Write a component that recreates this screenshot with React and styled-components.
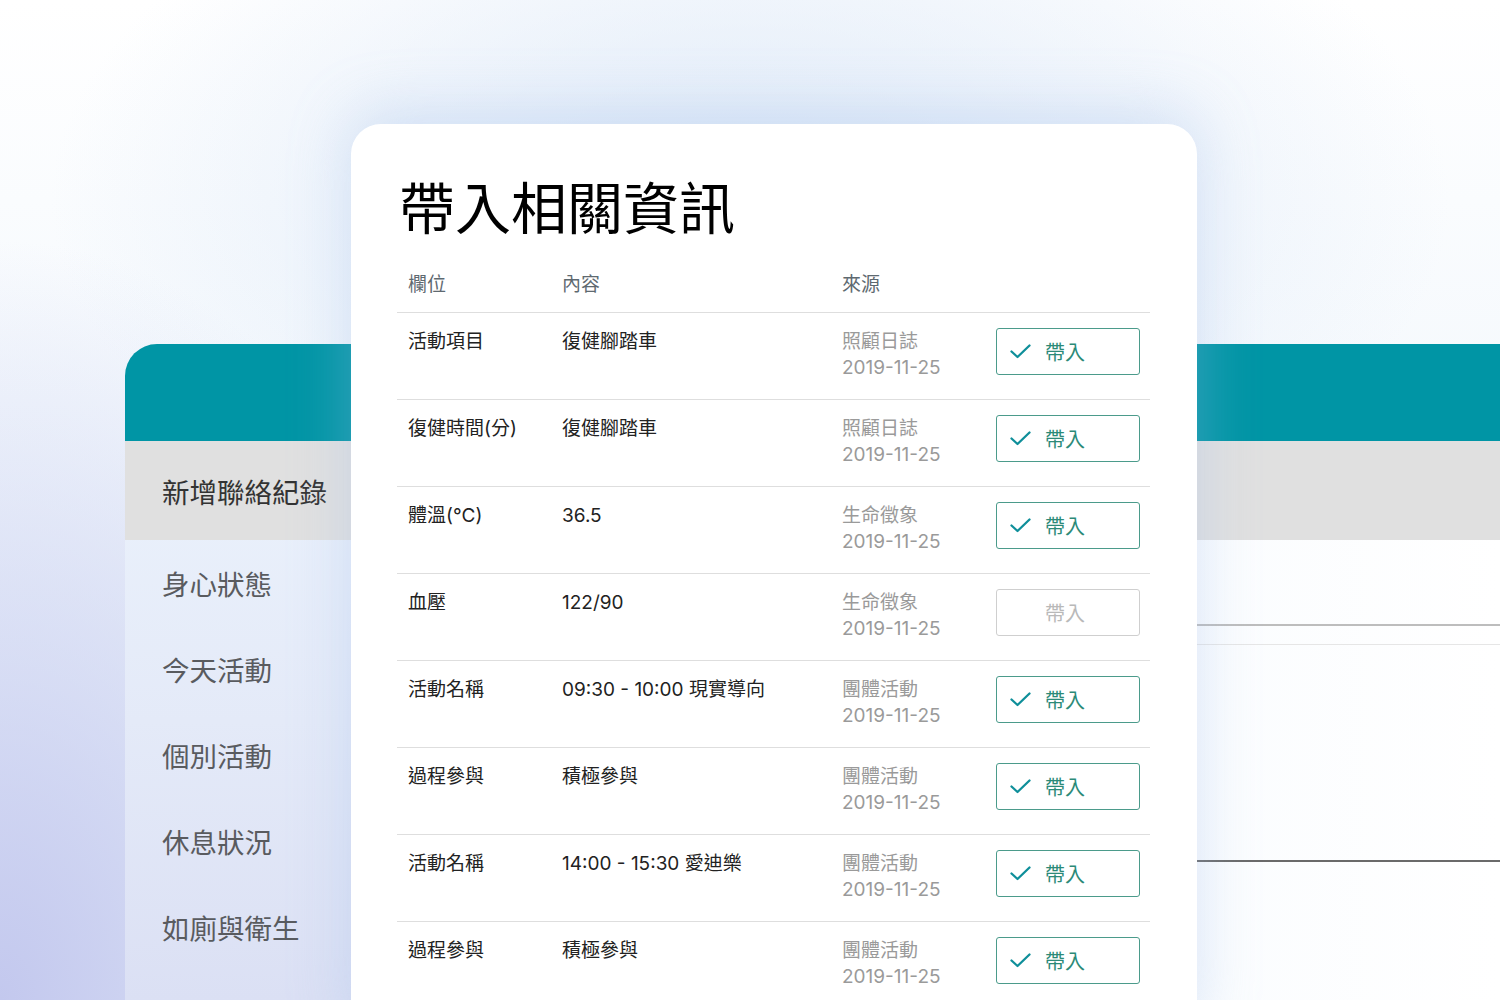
import React from "react";
import styled, { createGlobalStyle } from "styled-components";

const GlobalStyle = createGlobalStyle`
  html, body { margin: 0; padding: 0; }
  body {
    font-family: "Inter", "Noto Sans CJK TC", sans-serif;
    background: #ffffff;
  }
  * { box-sizing: border-box; }
`;

const Stage = styled.div`
  position: relative;
  width: 1500px;
  height: 1000px;
  overflow: hidden;
  padding: 344px 0 0 125px;
  background:
    radial-gradient(ellipse 520px 760px at 0% 100%, #c3c8ee 0%, rgba(200, 206, 240, 0.6) 45%, rgba(220, 230, 248, 0) 100%),
    radial-gradient(ellipse 700px 380px at 50% 20%, rgba(214, 228, 246, 0.8) 0%, rgba(230, 240, 250, 0) 100%),
    linear-gradient(180deg, #ffffff 0%, #f5f9fd 40%, #e8eff9 100%);
`;

const Window = styled.div`
  width: 1375px;
  height: 656px;
  border-top-left-radius: 32px;
  overflow: hidden;
  display: flex;
  flex-direction: column;
  background: #f7fafd;
`;

const WindowHeader = styled.div`
  height: 97px;
  flex: none;
  background: #0095a5;
`;

const WindowBody = styled.div`
  flex: 1;
  display: grid;
  grid-template-columns: 226px 1fr;
`;

const Sidebar = styled.nav`
  display: flex;
  flex-direction: column;
  background: linear-gradient(180deg, #ebf2fc 0%, #e4eaf8 50%, #dbe0f4 100%);
`;

const NavItem = styled.div`
  height: ${(p) => (p.$active ? "99px" : "86px")};
  flex: none;
  display: flex;
  align-items: center;
  padding-left: 37px;
  font-family: "Noto Sans CJK TC", sans-serif;
  font-size: 27.5px;
  color: ${(p) => (p.$active ? "#333333" : "#595b5f")};
  background: ${(p) => (p.$active ? "#e0e0e0" : "transparent")};
`;

const Main = styled.div`
  display: flex;
  flex-direction: column;
  background: linear-gradient(90deg, #dde8f7 0%, #eef4fc 20%, #f8fbfe 60%, #ffffff 100%);
`;

const GrayBand = styled.div`
  height: 99px;
  background: linear-gradient(90deg, #cfd3dd 0%, #e0e0e0 4%, #e0e0e0 100%);
`;

const FieldLine = styled.div`
  height: ${(p) => p.$h}px;
  border-bottom: ${(p) => p.$w}px solid ${(p) => p.$c};
`;

const Card = styled.section`
  position: absolute;
  left: 351px;
  top: 124px;
  width: 846px;
  height: 920px;
  border-radius: 30px;
  background: #ffffff;
  padding: 49px 47px 0 46px;
  box-shadow: 0 -10px 60px 0 rgba(160, 188, 234, 0.38);
`;

const Title = styled.h1`
  margin: 0 0 0 2px;
  font-family: "Noto Sans CJK TC", sans-serif;
  font-weight: 400;
  font-size: 56px;
  line-height: 64px;
  color: #000000;
`;

const Table = styled.div`
  margin-top: 34px;
  width: 753px;
  display: flex;
  flex-direction: column;
`;

const Row = styled.div`
  display: grid;
  grid-template-columns: 154px 280px 154px 144px;
  align-items: start;
  padding: ${(p) => (p.$head ? "0 10px 14px 11px" : "15px 10px 18px 11px")};
  border-bottom: 1px solid #dedede;
  font-family: "Inter", "Noto Sans CJK TC", sans-serif;
  font-size: 19px;
  line-height: 26px;
  color: ${(p) => (p.$head ? "#5e6970" : "#222222")};
`;

const Cell = styled.div`
  white-space: nowrap;
  padding-top: 1px;
`;

const Source = styled.div`
  color: #9a9a9a;
  white-space: nowrap;
  padding-top: 1px;
`;

const ImportButton = styled.button`
  width: 144px;
  height: 47px;
  display: flex;
  align-items: center;
  gap: 14px;
  padding: 0 0 0 13px;
  background: #ffffff;
  border: 1.5px solid ${(p) => (p.$disabled ? "#cfcfcf" : "#4b9b8b")};
  border-radius: 3px;
  font-family: "Noto Sans CJK TC", sans-serif;
  font-size: 20px;
  color: ${(p) => (p.$disabled ? "#b9b9b9" : "#2c8a78")};
  cursor: pointer;

  svg {
    visibility: ${(p) => (p.$disabled ? "hidden" : "visible")};
    flex: none;
  }
`;

const Check = () => (
  <svg width="21" height="15" viewBox="0 0 21 15" fill="none">
    <path d="M1.5 7.5 L7.5 13 L19.5 1.5" stroke="#0f8f9a" strokeWidth="2.3" strokeLinecap="round" strokeLinejoin="round" />
  </svg>
);

const navItems = ["新增聯絡紀錄", "身心狀態", "今天活動", "個別活動", "休息狀況", "如廁與衛生"];

const rows = [
  { field: "活動項目", content: "復健腳踏車", src: "照顧日誌" },
  { field: "復健時間(分)", content: "復健腳踏車", src: "照顧日誌" },
  { field: "體溫(°C)", content: "36.5", src: "生命徵象" },
  { field: "血壓", content: "122/90", src: "生命徵象", disabled: true },
  { field: "活動名稱", content: "09:30 - 10:00 現實導向", src: "團體活動" },
  { field: "過程參與", content: "積極參與", src: "團體活動" },
  { field: "活動名稱", content: "14:00 - 15:30 愛迪樂", src: "團體活動" },
  { field: "過程參與", content: "積極參與", src: "團體活動" },
];

export default function App() {
  return (
    <>
      <GlobalStyle />
      <Stage>
        <Window>
          <WindowHeader />
          <WindowBody>
            <Sidebar>
              {navItems.map((n, i) => (
                <NavItem key={n} $active={i === 0}>{n}</NavItem>
              ))}
            </Sidebar>
            <Main>
              <GrayBand />
              <FieldLine $h={86} $w={2} $c="#bdbdbd" />
              <FieldLine $h={19} $w={1} $c="#e6e6e6" />
              <FieldLine $h={217} $w={2} $c="#6a6a6a" />
            </Main>
          </WindowBody>
        </Window>

        <Card>
          <Title>帶入相關資訊</Title>
          <Table>
            <Row $head>
              <Cell>欄位</Cell>
              <Cell>內容</Cell>
              <Cell>來源</Cell>
              <Cell />
            </Row>
            {rows.map((r, i) => (
              <Row key={i}>
                <Cell>{r.field}</Cell>
                <Cell>{r.content}</Cell>
                <Source>
                  {r.src}
                  <br />
                  2019-11-25
                </Source>
                <ImportButton $disabled={r.disabled}>
                  <Check />
                  帶入
                </ImportButton>
              </Row>
            ))}
          </Table>
        </Card>
      </Stage>
    </>
  );
}
